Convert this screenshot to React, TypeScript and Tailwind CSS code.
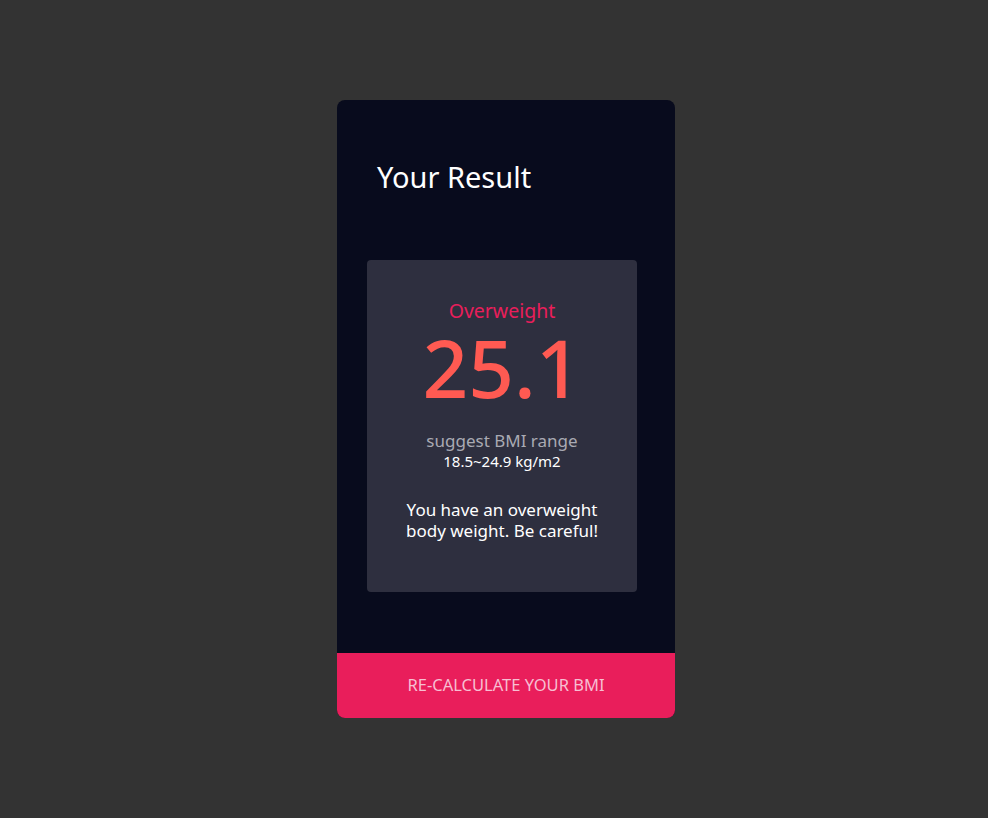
export default function App() {
  return (
    <div
      className="flex min-h-[818px] w-full items-start justify-center bg-[#333333] pl-[24px] pt-[100px]"
      style={{ fontFamily: '"Noto Sans", "Open Sans", sans-serif' }}
    >
      <div className="flex h-[618px] w-[338px] flex-col overflow-hidden rounded-lg bg-[#080b1d]">
        <div className="flex flex-1 flex-col px-[30px]">
          <h1 className="mt-[59px] pl-[10px] text-[29px] leading-[36px] text-white">
            Your Result
          </h1>
          <div className="mt-[65px] flex h-[332px] w-[270px] flex-col items-center rounded bg-[#2e2f3f] pt-[39px] text-center">
            <p className="text-[19.5px] leading-[24px] text-[#e91e5b]">Overweight</p>
            <p className="text-[80px] font-medium leading-[88px] text-[#ff5a52]">25.1</p>
            <p className="mt-[19px] text-[17px] leading-[21px] text-[#a9aab3]">
              suggest BMI range
            </p>
            <p className="text-[15px] leading-[20px] text-white">18.5~24.9 kg/m2</p>
            <p className="mt-[28px] px-[34px] text-[17px] leading-[21px] text-white">
              You have an overweight body weight. Be careful!
            </p>
          </div>
        </div>
        <button
          type="button"
          className="flex h-[65px] w-full items-center justify-center bg-[#e91e5b] text-[16.5px] text-[#f7bfd2]"
        >
          RE-CALCULATE YOUR BMI
        </button>
      </div>
    </div>
  )
}
